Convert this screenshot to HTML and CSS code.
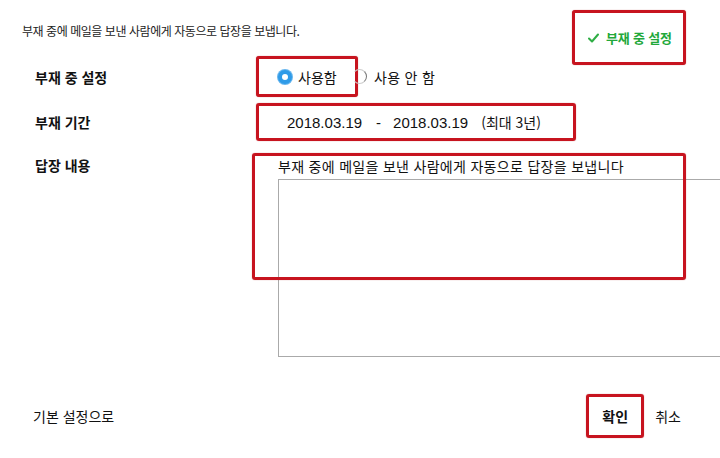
FILE: index.html
```html
<!DOCTYPE html>
<html lang="ko">
<head>
    <meta charset="UTF-8">
    <meta name="viewport" content="width=device-width, initial-scale=1.0">
    <title>부재 중 설정</title>
    <link rel="stylesheet" href="styles.css">
</head>
<body>

    <!-- Header: notice + status button -->
    <header class="top">
        <p class="notice">부재 중에 메일을 보낸 사람에게 자동으로 답장을 보냅니다.</p>
        <div class="status mark">
            <svg class="check" width="11" height="10" viewBox="0 0 11 10">
                <polyline points="1,5.5 4,8.5 10,1.5" fill="none" stroke="#2fae45" stroke-width="2" stroke-linecap="round" stroke-linejoin="round"/>
            </svg>
            <span>부재 중 설정</span>
        </div>
    </header>

    <div class="form">
        <div class="row row-use">
            <span class="label">부재 중 설정</span>
            <div class="field">
                <label class="choice mark">
                    <span class="radio on"></span>
                    <span>사용함</span>
                </label>
                <label class="choice off">
                    <span class="radio half"></span>
                    <span>사용 안 함</span>
                </label>
            </div>
        </div>

        <div class="row row-period">
            <span class="label">부재 기간</span>
            <div class="field">
                <div class="period mark">
                    <span class="date">2018.03.19</span>
                    <span class="dash">-</span>
                    <span class="date">2018.03.19</span>
                    <span class="limit">(최대 3년)</span>
                </div>
            </div>
        </div>

        <div class="row row-reply">
            <span class="label">답장 내용</span>
            <div class="field reply">
                <p class="reply-text">부재 중에 메일을 보낸 사람에게 자동으로 답장을 보냅니다</p>
                <div class="textarea"></div>
                <div class="mark reply-mark"></div>
            </div>
        </div>
    </div>

    <footer class="bottom">
        <span class="reset">기본 설정으로</span>
        <div class="actions">
            <span class="ok mark">확인</span>
            <span class="cancel">취소</span>
        </div>
    </footer>

</body>
</html>
```

FILE: styles.css
```css
body {
    margin: 0;
    width: 720px;
    height: 458px;
    overflow: hidden;
    background: #fff;
    color: #111;
    font-family: "Noto Sans CJK KR", "Noto Sans", sans-serif;
}

/* red annotation frame */
.mark {
    border: 3px solid #c7141f;
    border-radius: 3px;
    box-sizing: border-box;
    box-shadow: 0 0 1px rgba(160, 0, 10, 0.6);
}

.top {
    height: 56px;
    display: flex;
    align-items: flex-start;
}

.notice {
    margin: 22px 0 0 22px;
    font-size: 12px;
    letter-spacing: -0.45px;
    color: #222;
    line-height: 18px;
}

.status {
    margin: 10px 34px 0 auto;
    width: 114px;
    height: 55px;
    display: flex;
    align-items: center;
    padding-left: 13px;
    gap: 7px;
    color: #22a83a;
    font-weight: bold;
    font-size: 13px;
    letter-spacing: -0.2px;
    background: #fff;
}

.check {
    display: block;
}

.form {
    display: flex;
    flex-direction: column;
}

.row {
    display: flex;
    align-items: center;
}

.label {
    flex-shrink: 0;
    width: 256px;
    padding-left: 35px;
    box-sizing: border-box;
    font-size: 14px;
    font-weight: bold;
    color: #111;
}

.field {
    display: flex;
    align-items: center;
}

.row-use {
    height: 41px;
}

.choice {
    display: flex;
    align-items: center;
    font-size: 14px;
    gap: 6px;
}

.choice.mark {
    width: 102px;
    height: 41px;
    padding-left: 19px;
    background: #fff;
}

.choice.off {
    margin-left: -6px;
    gap: 7px;
    letter-spacing: 0.3px;
}

.radio {
    width: 15px;
    height: 15px;
    border-radius: 50%;
    box-sizing: border-box;
}

.radio.on {
    width: 14px;
    height: 14px;
    background: #fff;
    border: 4px solid #2f9be8;
    box-shadow: 0 0 0 1px #67b6ee;
}

.radio.half {
    border: 1px solid transparent;
    border-right-color: #777;
    border-top-color: #ccc;
    border-bottom-color: #ccc;
}

.row-period {
    margin-top: 6px;
    height: 38px;
}

.period {
    width: 320px;
    height: 38px;
    display: flex;
    align-items: center;
    padding-left: 28px;
    font-family: "Liberation Sans", "Noto Sans CJK KR", sans-serif;
    font-size: 15px;
    color: #111;
}

.dash {
    margin: 0 12px 0 14px;
}

.limit {
    margin-left: 13px;
    font-family: "Noto Sans CJK KR", sans-serif;
    font-size: 14px;
}

.row-reply {
    margin-top: 12px;
    align-items: flex-start;
}

.row-reply .label {
    margin-top: 2px;
}

.reply {
    position: relative;
    flex-direction: column;
    align-items: flex-start;
    padding-left: 22px;
}

.reply-text {
    margin: 4px 0 0 0;
    font-size: 14px;
    letter-spacing: 0.3px;
    line-height: 18px;
    white-space: nowrap;
}

.textarea {
    margin-top: 4px;
    width: 460px;
    height: 178px;
    border: 1px solid #aaa;
    box-sizing: border-box;
}

.reply-mark {
    position: absolute;
    left: -4px;
    top: 0;
    width: 434px;
    height: 127px;
}

.bottom {
    margin-top: 37px;
    display: flex;
    align-items: center;
    height: 44px;
}

.reset {
    margin-left: 33px;
    font-size: 14px;
}

.actions {
    margin-left: auto;
    margin-right: 39px;
    display: flex;
    align-items: center;
    gap: 11px;
    font-size: 14px;
}

.ok {
    width: 58px;
    height: 44px;
    display: flex;
    align-items: center;
    justify-content: center;
    font-weight: bold;
}
```
